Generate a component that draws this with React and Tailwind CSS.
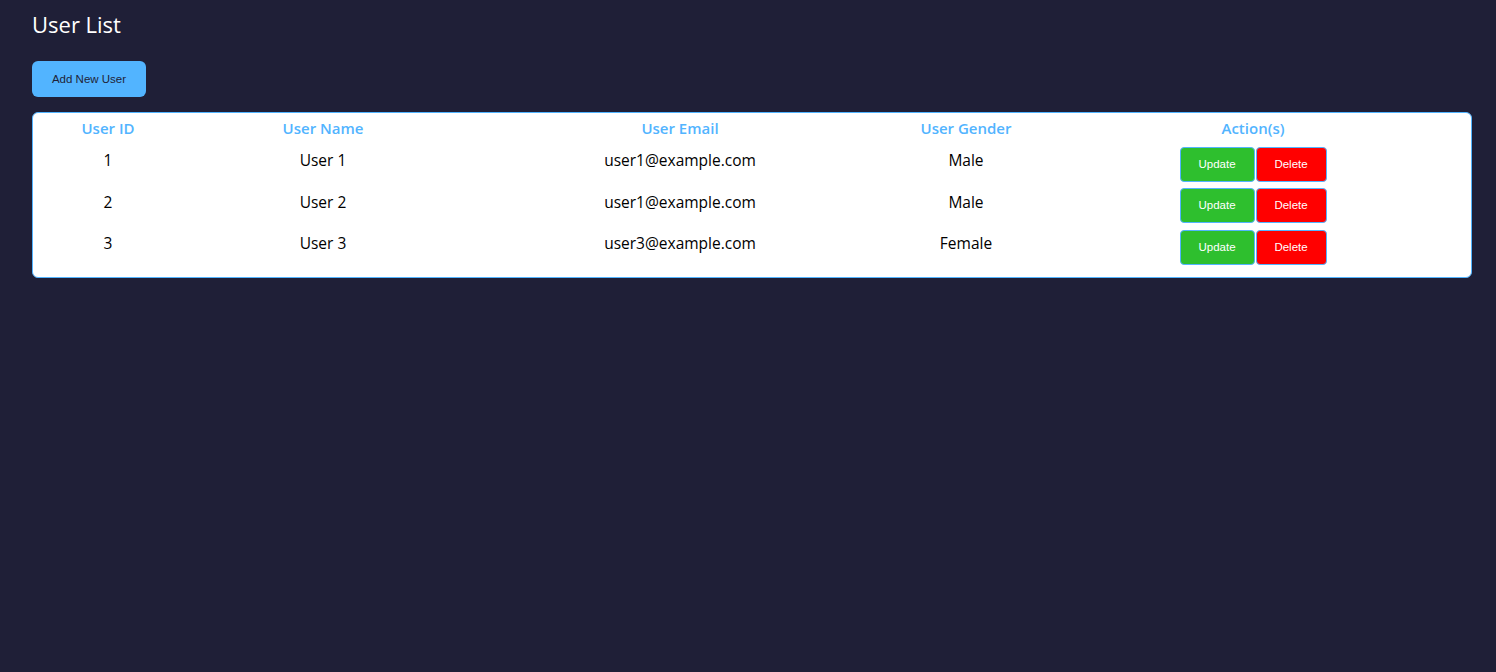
const users = [
  { id: 1, name: 'User 1', email: 'user1@example.com', gender: 'Male' },
  { id: 2, name: 'User 2', email: 'user1@example.com', gender: 'Male' },
  { id: 3, name: 'User 3', email: 'user3@example.com', gender: 'Female' },
];

export default function App() {
  return (
    <div className="min-h-screen bg-[#1f1f37] pl-8 pr-6 pt-[10px] font-['Open_Sans',sans-serif]">
      <h1 className="text-[22px] font-medium text-white leading-[28px]">User List</h1>

      <button className="mt-[23px] h-9 w-[114px] rounded-md bg-[#52b4ff] pt-px text-[11.5px] text-[#1f1f37] font-['Liberation_Sans',Arial,sans-serif]">
        Add New User
      </button>

      <div className="mt-[15px] rounded-md border border-[#52b4ff] bg-white pb-[9px]">
        <table className="w-full table-fixed text-center">
          <colgroup>
            <col className="w-[150px]" />
            <col className="w-[280px]" />
            <col className="w-[434px]" />
            <col className="w-[138px]" />
            <col />
          </colgroup>
          <thead>
            <tr className="text-[15px] font-semibold text-[#52b4ff]">
              <th className="h-[30px] pt-[1px] font-semibold">User ID</th>
              <th className="font-semibold">User Name</th>
              <th className="font-semibold">User Email</th>
              <th className="font-semibold">User Gender</th>
              <th className="font-semibold">Action(s)</th>
            </tr>
          </thead>
          <tbody className="text-[15.5px] font-medium text-black">
            {users.map((u) => (
              <tr key={u.id} className="h-[41.5px]">
                <td className="pb-[6px]">{u.id}</td>
                <td className="pb-[6px]">{u.name}</td>
                <td className="pb-[6px]">{u.email}</td>
                <td className="pb-[6px]">{u.gender}</td>
                <td className="pt-px">
                  <div className="flex justify-center gap-px font-['Liberation_Sans',Arial,sans-serif] text-[11.5px] font-normal text-white">
                    <button className="h-[35px] w-[75px] rounded border border-[#52b4ff] bg-[#2ebf2e]">Update</button>
                    <button className="h-[35px] w-[71px] rounded border border-[#52b4ff] bg-[#ff0000]">Delete</button>
                  </div>
                </td>
              </tr>
            ))}
          </tbody>
        </table>
      </div>
    </div>
  );
}
